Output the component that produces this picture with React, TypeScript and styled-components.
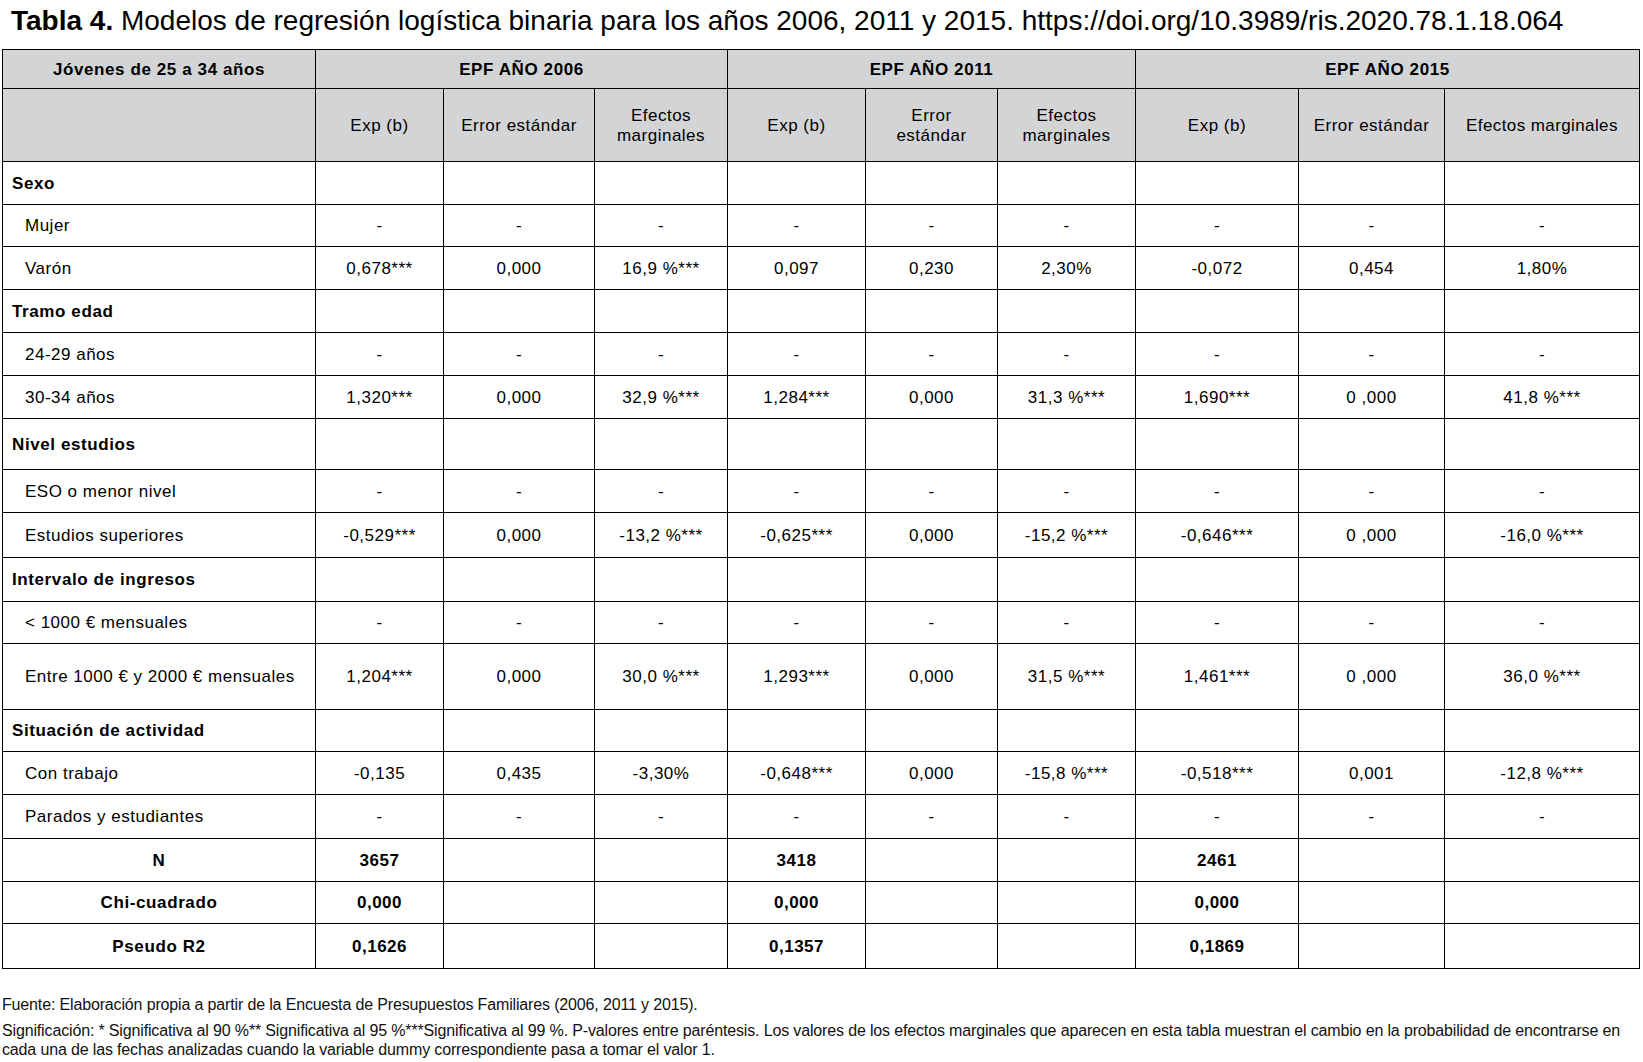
import React from "react";
import styled, { createGlobalStyle } from "styled-components";

const Global = createGlobalStyle`
  html, body { margin: 0; padding: 0; background: #fff; }
  body { font-family: "Liberation Sans", Arial, sans-serif; color: #000; }
`;

const Page = styled.div`
  width: 1643px;
  height: 1062px;
  padding: 6px 0 0 2px;
  box-sizing: border-box;
  overflow: hidden;
`;

const Title = styled.h1`
  margin: 0 0 13px 0;
  padding-left: 9px;
  font-size: 28px;
  line-height: 30px;
  font-weight: 400;
  white-space: nowrap;
`;

const TitleStrong = styled.span`
  font-weight: 700;
`;

const Table = styled.table`
  border-collapse: collapse;
  table-layout: fixed;
  width: 1637px;
  font-size: 17px;
  letter-spacing: 0.5px;
`;

const Col = styled.col<{ $w: number }>`
  width: ${(p) => p.$w}px;
`;

const Row = styled.tr<{ $h: number }>`
  height: ${(p) => p.$h}px;
`;

const HeadCell = styled.th<{ $spacing?: number }>`
  background: #d3d4d6;
  border: 1px solid #000;
  padding: 1px 4px 0;
  text-align: center;
  vertical-align: middle;
  font-weight: 400;
  line-height: 20px;
  letter-spacing: ${(p) => p.$spacing ?? 0.5}px;
`;

const GroupCell = styled(HeadCell)`
  font-weight: 700;
  letter-spacing: 0.6px;
`;

const LabelCell = styled.td<{ $bold?: boolean; $indent?: boolean; $center?: boolean }>`
  border: 1px solid #000;
  padding: 1px 0 0 ${(p) => (p.$center ? 0 : p.$indent ? 22 : 9)}px;
  text-align: ${(p) => (p.$center ? "center" : "left")};
  vertical-align: middle;
  font-weight: ${(p) => (p.$bold ? 700 : 400)};
  letter-spacing: ${(p) => (p.$bold ? "0.6px" : "0.5px")};
  white-space: nowrap;
`;

const DataCell = styled.td<{ $bold?: boolean }>`
  border: 1px solid #000;
  padding: 1px 0 0;
  text-align: center;
  vertical-align: middle;
  font-weight: ${(p) => (p.$bold ? 700 : 400)};
  white-space: nowrap;
`;

const Notes = styled.div`
  margin-top: 26px;
  font-family: "Liberation Sans", Arial, sans-serif;
  font-size: 16px;
  letter-spacing: -0.15px;
  line-height: 19px;
  color: #111;
`;

const Note = styled.p<{ $gap?: number }>`
  margin: ${(p) => p.$gap ?? 0}px 0 0 0;
  white-space: nowrap;
`;

type DataRow =
  | { kind: "section"; label: string; h: number }
  | { kind: "item"; label: string; h: number; vals: string[] };

const dash = Array(9).fill("-");

const rows: DataRow[] = [
  { kind: "section", label: "Sexo", h: 43 },
  { kind: "item", label: "Mujer", h: 42, vals: dash },
  {
    kind: "item",
    label: "Varón",
    h: 43,
    vals: ["0,678***", "0,000", "16,9 %***", "0,097", "0,230", "2,30%", "-0,072", "0,454", "1,80%"],
  },
  { kind: "section", label: "Tramo edad", h: 43 },
  { kind: "item", label: "24-29 años", h: 43, vals: dash },
  {
    kind: "item",
    label: "30-34 años",
    h: 43,
    vals: ["1,320***", "0,000", "32,9 %***", "1,284***", "0,000", "31,3 %***", "1,690***", "0 ,000", "41,8 %***"],
  },
  { kind: "section", label: "Nivel estudios", h: 51 },
  { kind: "item", label: "ESO o menor nivel", h: 43, vals: dash },
  {
    kind: "item",
    label: "Estudios superiores",
    h: 45,
    vals: ["-0,529***", "0,000", "-13,2 %***", "-0,625***", "0,000", "-15,2 %***", "-0,646***", "0 ,000", "-16,0 %***"],
  },
  { kind: "section", label: "Intervalo de ingresos", h: 44 },
  { kind: "item", label: "< 1000 € mensuales", h: 42, vals: dash },
  {
    kind: "item",
    label: "Entre 1000 € y 2000 € mensuales",
    h: 66,
    vals: ["1,204***", "0,000", "30,0 %***", "1,293***", "0,000", "31,5 %***", "1,461***", "0 ,000", "36,0 %***"],
  },
  { kind: "section", label: "Situación de actividad", h: 42 },
  {
    kind: "item",
    label: "Con trabajo",
    h: 43,
    vals: ["-0,135", "0,435", "-3,30%", "-0,648***", "0,000", "-15,8 %***", "-0,518***", "0,001", "-12,8 %***"],
  },
  { kind: "item", label: "Parados y estudiantes", h: 44, vals: dash },
];

const summary = [
  { label: "N", h: 43, vals: ["3657", "3418", "2461"] },
  { label: "Chi-cuadrado", h: 42, vals: ["0,000", "0,000", "0,000"] },
  { label: "Pseudo R2", h: 45, vals: ["0,1626", "0,1357", "0,1869"] },
];

const widths = [313, 128, 151, 133, 138, 132, 138, 163, 146, 195];

export default function App() {
  return (
    <>
      <Global />
      <Page>
        <Title>
          <TitleStrong>Tabla 4.</TitleStrong> Modelos de regresión logística binaria para los años 2006, 2011 y
          2015. https://doi.org/10.3989/ris.2020.78.1.18.064
        </Title>
        <Table>
          <colgroup>
            {widths.map((w, i) => (
              <Col key={i} $w={w} />
            ))}
          </colgroup>
          <thead>
            <Row $h={39}>
              <GroupCell>Jóvenes de 25 a 34 años</GroupCell>
              <GroupCell colSpan={3}>EPF AÑO 2006</GroupCell>
              <GroupCell colSpan={3}>EPF AÑO 2011</GroupCell>
              <GroupCell colSpan={3}>EPF AÑO 2015</GroupCell>
            </Row>
            <Row $h={73}>
              <HeadCell />
              <HeadCell>Exp (b)</HeadCell>
              <HeadCell>Error estándar</HeadCell>
              <HeadCell>
                Efectos
                <br />
                marginales
              </HeadCell>
              <HeadCell>Exp (b)</HeadCell>
              <HeadCell>
                Error
                <br />
                estándar
              </HeadCell>
              <HeadCell>
                Efectos
                <br />
                marginales
              </HeadCell>
              <HeadCell>Exp (b)</HeadCell>
              <HeadCell>Error estándar</HeadCell>
              <HeadCell $spacing={0.4}>Efectos marginales</HeadCell>
            </Row>
          </thead>
          <tbody>
            {rows.map((r) =>
              r.kind === "section" ? (
                <Row key={r.label} $h={r.h}>
                  <LabelCell $bold>{r.label}</LabelCell>
                  {Array.from({ length: 9 }).map((_, i) => (
                    <DataCell key={i} />
                  ))}
                </Row>
              ) : (
                <Row key={r.label} $h={r.h}>
                  <LabelCell $indent>{r.label}</LabelCell>
                  {r.vals.map((v, i) => (
                    <DataCell key={i}>{v}</DataCell>
                  ))}
                </Row>
              )
            )}
            {summary.map((s) => (
              <Row key={s.label} $h={s.h}>
                <LabelCell $bold $center>
                  {s.label}
                </LabelCell>
                {s.vals.map((v, i) => (
                  <React.Fragment key={i}>
                    <DataCell $bold>{v}</DataCell>
                    <DataCell />
                    <DataCell />
                  </React.Fragment>
                ))}
              </Row>
            ))}
          </tbody>
        </Table>
        <Notes>
          <Note>
            Fuente: Elaboración propia a partir de la Encuesta de Presupuestos Familiares (2006, 2011 y 2015).
          </Note>
          <Note $gap={7}>
            Significación: * Significativa al 90 %** Significativa al 95 %***Significativa al 99 %. P-valores entre
            paréntesis. Los valores de los efectos marginales que aparecen en esta tabla muestran el cambio en la
            probabilidad de encontrarse en
            <br />
            cada una de las fechas analizadas cuando la variable dummy correspondiente pasa a tomar el valor 1.
          </Note>
        </Notes>
      </Page>
    </>
  );
}
